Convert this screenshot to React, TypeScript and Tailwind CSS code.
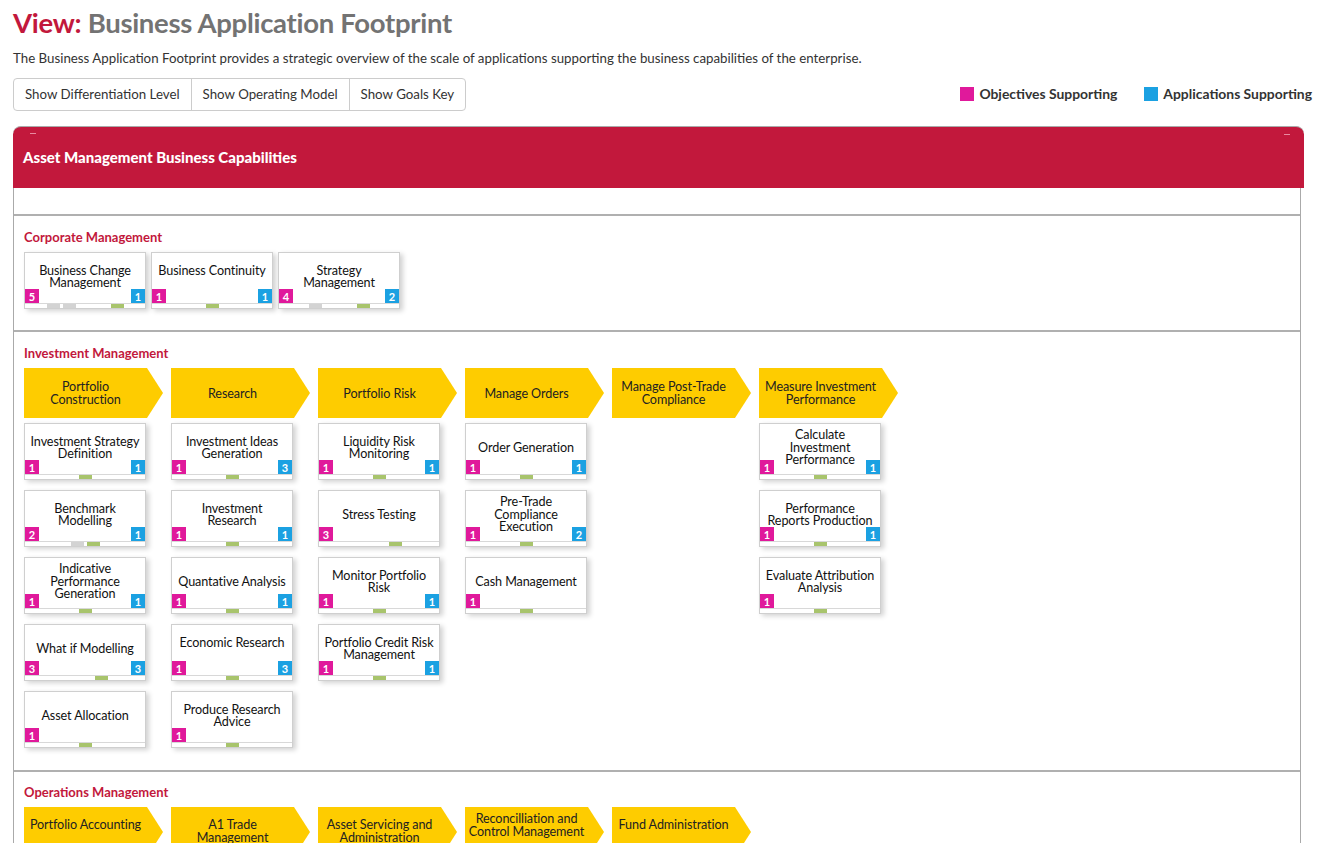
import React from "react";

type Cap = { name: string; obj: number; apps?: number; bar: string; top?: boolean };

const corporate: Cap[] = [
  { name: "Business Change\nManagement", obj: 5, apps: 1, bar: "gg__G" },
  { name: "Business Continuity", obj: 1, apps: 1, bar: "G", top: true },
  { name: "Strategy\nManagement", obj: 4, apps: 2, bar: "g__G" },
];

const investment: { stage: string; caps: Cap[] }[] = [
  {
    stage: "Portfolio\nConstruction",
    caps: [
      { name: "Investment Strategy\nDefinition", obj: 1, apps: 1, bar: "G" },
      { name: "Benchmark\nModelling", obj: 2, apps: 1, bar: "gG" },
      { name: "Indicative\nPerformance\nGeneration", obj: 1, apps: 1, bar: "G" },
      { name: "What if Modelling", obj: 3, apps: 3, bar: "__G" },
      { name: "Asset Allocation", obj: 1, bar: "G" },
    ],
  },
  {
    stage: "Research",
    caps: [
      { name: "Investment Ideas\nGeneration", obj: 1, apps: 3, bar: "G" },
      { name: "Investment\nResearch", obj: 1, apps: 1, bar: "G" },
      { name: "Quantative Analysis", obj: 1, apps: 1, bar: "G" },
      { name: "Economic Research", obj: 1, apps: 3, bar: "G", top: true },
      { name: "Produce Research\nAdvice", obj: 1, bar: "G" },
    ],
  },
  {
    stage: "Portfolio Risk",
    caps: [
      { name: "Liquidity Risk\nMonitoring", obj: 1, apps: 1, bar: "G" },
      { name: "Stress Testing", obj: 3, bar: "__G" },
      { name: "Monitor Portfolio\nRisk", obj: 1, apps: 1, bar: "G" },
      { name: "Portfolio Credit Risk\nManagement", obj: 1, apps: 1, bar: "G" },
    ],
  },
  {
    stage: "Manage Orders",
    caps: [
      { name: "Order Generation", obj: 1, apps: 1, bar: "G" },
      { name: "Pre-Trade\nCompliance\nExecution", obj: 1, apps: 2, bar: "G" },
      { name: "Cash Management", obj: 1, bar: "G" },
    ],
  },
  { stage: "Manage Post-Trade\nCompliance", caps: [] },
  {
    stage: "Measure Investment\nPerformance",
    caps: [
      { name: "Calculate\nInvestment\nPerformance", obj: 1, apps: 1, bar: "G" },
      { name: "Performance\nReports Production", obj: 1, apps: 1, bar: "G" },
      { name: "Evaluate Attribution\nAnalysis", obj: 1, bar: "G" },
    ],
  },
];

const operations = [
  { label: "Portfolio Accounting", up: false },
  { label: "A1 Trade\nManagement", up: false },
  { label: "Asset Servicing and\nAdministration", up: false },
  { label: "Reconcilliation and\nControl Management", up: true },
  { label: "Fund Administration", up: false },
];

function Chevron({ label, align }: { label: string; align?: "top" | "up" }) {
  return (
    <div
      className={
        "flex h-[50px] w-[139px] bg-[#fecc00] [clip-path:polygon(0_0,123px_0,139px_50%,123px_100%,0_100%)] " +
        (align === "top" ? "items-start pt-[11px]" : align === "up" ? "items-start pt-[5px]" : "items-center")
      }
    >
      <div className="w-[123px] whitespace-pre-line text-center text-[12.6px] leading-[13px] tracking-[-0.1px] text-[#222]">{label}</div>
    </div>
  );
}

function CapBox({ cap }: { cap: Cap }) {
  return (
    <div className="w-[122px] border border-[#cfcfcf] bg-white shadow-[3px_2px_5px_rgba(0,0,0,0.18)]">
      <div className="relative h-[50px]">
        <div
          className={
            "flex h-[48px] items-center justify-center whitespace-pre-line text-center text-[12.6px] leading-[12.5px] tracking-[-0.1px] text-[#111] " +
            (cap.top ? "pb-[12px]" : "")
          }
        >
          {cap.name}
        </div>
        <div className="absolute bottom-0 left-0 flex h-[14px] w-[14px] items-center justify-center bg-[#e0199b] text-[11px] font-bold leading-none text-white">
          {cap.obj}
        </div>
        {cap.apps !== undefined && (
          <div className="absolute bottom-0 right-0 flex h-[14px] w-[14px] items-center justify-center bg-[#1ba1e2] text-[11px] font-bold leading-none text-white">
            {cap.apps}
          </div>
        )}
      </div>
      <div className="flex h-[5px] justify-center gap-[3px] border-t border-[#d8d8d8]">
        {cap.bar.split("").map((c, i) => (
          <div
            key={i}
            className={
              "h-full w-[13px] " +
              (c === "G" ? "bg-[#a8c46c]" : c === "g" ? "bg-[#d3d3d3]" : "bg-transparent")
            }
          />
        ))}
      </div>
    </div>
  );
}

function SectionLabel({ children }: { children: React.ReactNode }) {
  return <div className="mb-[8px] text-[13px] font-bold leading-[14px] text-[#c2183c]">{children}</div>;
}

export default function App() {
  return (
    <div className="min-h-screen bg-white pl-[13px] pr-[10px] pt-[6px] font-[Lato,'Liberation_Sans',sans-serif] text-[#333]">
      <h1 className="text-[27.5px] font-bold leading-[34px] tracking-[-0.3px]">
        <span className="text-[#c2183c]">View:</span> <span className="text-[#737373]">Business Application Footprint</span>
      </h1>
      <p className="mt-[9px] text-[13.3px] leading-[18px] text-[#333]">
        The Business Application Footprint provides a strategic overview of the scale of applications supporting the business
        capabilities of the enterprise.
      </p>

      <div className="mt-[11px] flex items-center justify-between">
        <div className="flex h-[33px] rounded-[4px] border border-[#ccc] text-[13.3px] text-[#333]">
          <button className="border-r border-[#ccc] px-[11px]">Show Differentiation Level</button>
          <button className="border-r border-[#ccc] px-[11px]">Show Operating Model</button>
          <button className="px-[11px]">Show Goals Key</button>
        </div>
        <div className="flex items-center gap-[27px] text-[13.9px] font-bold text-[#333]">
          <div className="flex items-center gap-[5px]">
            <span className="h-[14px] w-[14px] bg-[#e0199b]" />
            Objectives Supporting
          </div>
          <div className="flex items-center gap-[5px]">
            <span className="h-[14px] w-[14px] bg-[#1ba1e2]" />
            Applications Supporting
          </div>
        </div>
      </div>

      <div className="mt-[15px] w-[1291px]">
        <div className="relative flex h-[62px] items-center rounded-t-[8px] border-t border-[#aaa] bg-[#c2183c] px-[10px]">
          <span className="absolute left-[17px] top-[6px] h-px w-[6px] bg-[#e88aa0]" />
          <span className="absolute right-[14px] top-[7px] h-px w-[6px] bg-[#e88aa0]" />
          <span className="text-[15px] font-black text-white">Asset Management Business Capabilities</span>
        </div>
        <div className="mr-[3px] border-x border-[#aaa]">
          <div className="h-[28px] border-b-2 border-[#b0b0b0]" />

          <div className="border-b-2 border-[#b0b0b0] px-[10px] pb-[21px] pt-[14px]">
            <SectionLabel>Corporate Management</SectionLabel>
            <div className="flex gap-[5px]">
              {corporate.map((c) => (
                <CapBox key={c.name} cap={c} />
              ))}
            </div>
          </div>

          <div className="border-b-2 border-[#b0b0b0] px-[10px] pb-[22px] pt-[14px]">
            <SectionLabel>Investment Management</SectionLabel>
            <div className="flex gap-[8px]">
              {investment.map((col) => (
                <div key={col.stage} className="flex w-[139px] flex-col">
                  <Chevron label={col.stage} />
                  <div className="mt-[5px] flex flex-col gap-[10px]">
                    {col.caps.map((c) => (
                      <CapBox key={c.name} cap={c} />
                    ))}
                  </div>
                </div>
              ))}
            </div>
          </div>

          <div className="px-[10px] pb-[30px] pt-[13px]">
            <SectionLabel>Operations Management</SectionLabel>
            <div className="flex gap-[8px]">
              {operations.map((o) => (
                <Chevron key={o.label} label={o.label} align={o.up ? "up" : "top"} />
              ))}
            </div>
          </div>
        </div>
      </div>
    </div>
  );
}
